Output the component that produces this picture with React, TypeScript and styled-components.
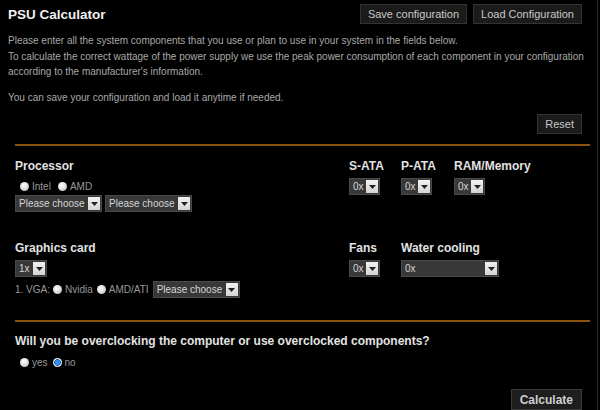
import styled, { createGlobalStyle } from 'styled-components';

const GlobalStyle = createGlobalStyle`
  html, body {
    margin: 0;
    padding: 0;
    background: #000;
  }
  body {
    font-family: "Liberation Sans", Arial, sans-serif;
    font-size: 10px;
    color: #a8a8a8;
  }
`;

type SelectProps = { value: string; width: number };

function FakeSelect({ value, width }: SelectProps) {
  return (
    <SelectBox $width={width}>
      <SelectValue>{value}</SelectValue>
      <ArrowBox>
        <svg width="7" height="4" viewBox="0 0 7 4">
          <path d="M0 0 L7 0 L3.5 4 Z" fill="#222" />
        </svg>
      </ArrowBox>
    </SelectBox>
  );
}

function Radio({ label, checked = false }: { label: string; checked?: boolean }) {
  return (
    <RadioLabel>
      <RadioDot $checked={checked} />
      {label}
    </RadioLabel>
  );
}

export default function App() {
  return (
    <>
      <GlobalStyle />
      <Page>
        <Header>
          <Title>PSU Calculator</Title>
          <Actions>
            <Button>Save configuration</Button>
            <Button>Load Configuration</Button>
          </Actions>
        </Header>

        <Intro>
          Please enter all the system components that you use or plan to use in your system in the fields below.
          <br />
          To calculate the correct wattage of the power supply we use the peak power consumption of each component in your configuration
          <br />
          according to the manufacturer's information.
        </Intro>
        <Intro $gap={10}>You can save your configuration and load it anytime if needed.</Intro>

        <ResetRow>
          <Button>Reset</Button>
        </ResetRow>

        <Divider />

        <FieldRow $top={12}>
          <LeftCol>
            <Heading>Processor</Heading>
            <RadioRow $gap={7}>
              <Radio label="Intel" />
              <Radio label="AMD" />
            </RadioRow>
            <SelectRow>
              <FakeSelect value="Please choose" width={87} />
              <FakeSelect value="Please choose" width={87} />
            </SelectRow>
          </LeftCol>
          <RightGrid>
            <Field>
              <Heading>S-ATA</Heading>
              <FakeSelect value="0x" width={31} />
            </Field>
            <Field>
              <Heading>P-ATA</Heading>
              <FakeSelect value="0x" width={31} />
            </Field>
            <Field>
              <Heading>RAM/Memory</Heading>
              <FakeSelect value="0x" width={31} />
            </Field>
          </RightGrid>
        </FieldRow>

        <FieldRow $top={28}>
          <LeftCol>
            <Heading>Graphics card</Heading>
            <FakeSelect value="1x" width={32} />
            <VgaRow>
              <VgaLabel>1. VGA:</VgaLabel>
              <Radio label="Nvidia" />
              <Radio label="AMD/ATI" />
              <FakeSelect value="Please choose" width={87} />
            </VgaRow>
          </LeftCol>
          <RightGrid>
            <Field>
              <Heading>Fans</Heading>
              <FakeSelect value="0x" width={31} />
            </Field>
            <Field>
              <Heading>Water cooling</Heading>
              <FakeSelect value="0x" width={98} />
            </Field>
          </RightGrid>
        </FieldRow>

        <Divider $top={22} />

        <Question>Will you be overclocking the computer or use overclocked components?</Question>
        <AnswerRow $gap={5}>
          <Radio label="yes" />
          <Radio label="no" checked />
        </AnswerRow>

        <Footer>
          <CalcButton>Calculate</CalcButton>
        </Footer>
      </Page>
    </>
  );
}

const Page = styled.div`
  width: 589px;
  height: 410px;
  overflow: hidden;
  padding-left: 8px;
  border-right: 1px solid #2c2c2c;
  box-sizing: content-box;
`;

const Header = styled.div`
  display: flex;
  align-items: center;
  justify-content: space-between;
  padding: 4px 15px 0 0;
  height: 20px;
`;

const Title = styled.h1`
  margin: 0;
  font-size: 13.5px;
  font-weight: bold;
  color: #f0f0f0;
`;

const Actions = styled.div`
  display: flex;
  gap: 6px;
`;

const Button = styled.button`
  height: 20px;
  padding: 0 7px;
  background: #1b1b1b;
  border: 1px solid #333;
  color: #c8c8c8;
  font-family: "Liberation Sans", Arial, sans-serif;
  font-size: 11px;
  cursor: pointer;
`;

const Intro = styled.p<{ $gap?: number }>`
  margin: ${(p) => p.$gap ?? 9}px 0 0;
  font-size: 10px;
  line-height: 15.5px;
  white-space: nowrap;
  color: #a8a8a8;
`;

const ResetRow = styled.div`
  display: flex;
  justify-content: flex-end;
  padding-right: 15px;
  margin-top: 9px;
`;

const Divider = styled.hr<{ $top?: number }>`
  margin: ${(p) => p.$top ?? 10}px 7px 0 7px;
  border: none;
  border-top: 2px solid #8a5210;
  height: 0;
`;

const FieldRow = styled.div<{ $top: number }>`
  display: flex;
  margin-top: ${(p) => p.$top}px;
  padding-left: 7px;
`;

const LeftCol = styled.div`
  width: 334px;
  flex-shrink: 0;
  display: flex;
  flex-direction: column;
  align-items: flex-start;
`;

const RightGrid = styled.div`
  flex: 1;
  display: grid;
  grid-template-columns: 52px 53px 1fr;
  align-items: start;
`;

const Field = styled.div`
  display: flex;
  flex-direction: column;
  align-items: flex-start;
  gap: 4px;
`;

const Heading = styled.div`
  font-size: 12px;
  line-height: 16px;
  font-weight: bold;
  white-space: nowrap;
  color: #e2e2e2;
  margin-bottom: 4px;

  ${Field} & {
    margin-bottom: 0;
  }
`;

const RadioRow = styled.div<{ $gap: number }>`
  display: flex;
  align-items: center;
  gap: ${(p) => p.$gap}px;
  height: 14px;
  margin-top: 1px;
  padding-left: 5px;
`;

const AnswerRow = styled(RadioRow)`
  margin: 6px 0 0 7px;
`;

const SelectRow = styled.div`
  display: flex;
  gap: 3px;
  margin-top: 2px;
`;

const VgaRow = styled.div`
  display: flex;
  align-items: center;
  gap: 4px;
  margin-top: 4px;
`;

const VgaLabel = styled.span`
  color: #999;
  font-size: 10px;
  margin-right: -1px;
`;

const RadioLabel = styled.label`
  display: inline-flex;
  align-items: center;
  color: #999;
  font-size: 10px;
`;

const RadioDot = styled.span<{ $checked: boolean }>`
  display: inline-block;
  width: 9px;
  height: 9px;
  border-radius: 50%;
  margin-right: 3px;
  background: ${(p) =>
    p.$checked
      ? 'radial-gradient(circle, #2f8ee8 0 2.5px, #0b4f9a 3px, #dfe9f4 3.5px)'
      : 'radial-gradient(circle at 40% 35%, #ffffff 0, #d6d6d6 60%, #a8a8a8 100%)'};
`;

const SelectBox = styled.div<{ $width: number }>`
  width: ${(p) => p.$width}px;
  height: 17px;
  box-sizing: border-box;
  display: flex;
  align-items: center;
  justify-content: space-between;
  background: #383838;
  border: 1px solid #4a4a4a;
  padding: 0 1px 0 3px;
  color: #d6d6d6;
  font-size: 10px;
`;

const SelectValue = styled.span`
  white-space: nowrap;
  overflow: hidden;
`;

const ArrowBox = styled.span`
  width: 12px;
  height: 13px;
  flex-shrink: 0;
  display: flex;
  align-items: center;
  justify-content: center;
  background: linear-gradient(#f2f2f2, #d4d4d4);
`;

const Question = styled.div`
  margin: 11px 0 0 7px;
  font-size: 12px;
  line-height: 16px;
  font-weight: bold;
  color: #e2e2e2;
`;

const Footer = styled.div`
  display: flex;
  justify-content: flex-end;
  padding-right: 15px;
  margin-top: 20px;
`;

const CalcButton = styled.button`
  height: 21px;
  padding: 0 8px;
  background: #1e1e1e;
  border: 1px solid #3a3a3a;
  color: #cfcfcf;
  font-family: "Liberation Sans", Arial, sans-serif;
  font-size: 12px;
  font-weight: bold;
  cursor: pointer;
`;
